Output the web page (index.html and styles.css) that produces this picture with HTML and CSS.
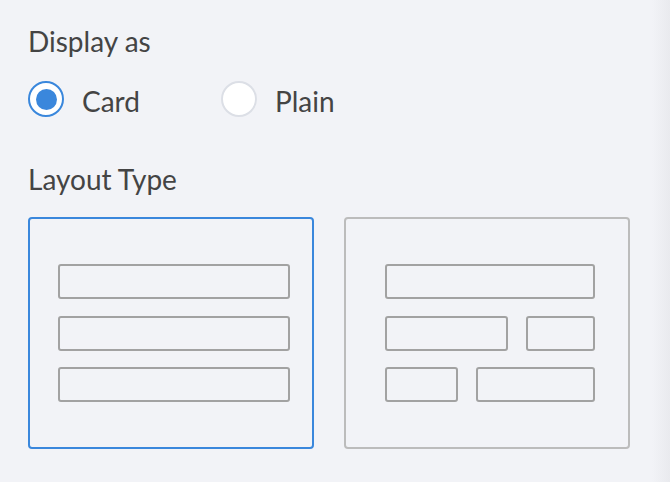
FILE: index.html
```html
<!DOCTYPE html>
<html>
<head>
<meta charset="utf-8">
<link rel="stylesheet" href="styles.css">
</head>
<body>
<div class="panel">
  <div class="heading">Display as</div>
  <div class="radio-row">
    <div class="option option-card">
      <span class="radio radio-checked"><span class="dot"></span></span>
      <span class="label">Card</span>
    </div>
    <div class="option">
      <span class="radio"></span>
      <span class="label">Plain</span>
    </div>
  </div>
  <div class="heading heading-layout">Layout Type</div>
  <div class="layouts">
    <div class="layout layout-selected">
      <div class="lrow"><div class="field w-full-l"></div></div>
      <div class="lrow"><div class="field w-full-l"></div></div>
      <div class="lrow"><div class="field w-full-l"></div></div>
    </div>
    <div class="layout layout-grid">
      <div class="lrow"><div class="field w-full-r"></div></div>
      <div class="lrow"><div class="field w-123"></div><div class="field w-69"></div></div>
      <div class="lrow"><div class="field w-73"></div><div class="field w-119"></div></div>
    </div>
  </div>
</div>
</body>
</html>
```

FILE: styles.css
```css
html, body {
  margin: 0;
  padding: 0;
  height: 100%;
}
body {
  background: linear-gradient(to right, #f2f3f7 0, #f2f3f7 calc(100% - 18px), #e9eaee 100%);
  font-family: Lato, "Open Sans", sans-serif;
  color: #444444;
}
.panel {
  display: flex;
  flex-direction: column;
  padding: 24px 0 0 28px;
}
.heading {
  font-size: 28px;
  line-height: 34px;
}
.heading-layout {
  margin-top: 45px;
}
.radio-row {
  display: flex;
  margin-top: 23px;
  height: 36px;
}
.option {
  display: flex;
  align-items: flex-start;
}
.option-card {
  width: 193px;
}
.radio {
  box-sizing: border-box;
  width: 36px;
  height: 36px;
  border-radius: 50%;
  border: 2px solid #dcdfe6;
  background: #ffffff;
  display: flex;
  align-items: center;
  justify-content: center;
}
.radio-checked {
  border-color: #3a87dc;
}
.dot {
  width: 21px;
  height: 21px;
  border-radius: 50%;
  background: #3a87dc;
}
.label {
  font-size: 28px;
  line-height: 34px;
  margin-top: 3px;
  margin-left: 18px;
}
.layouts {
  display: flex;
  gap: 30px;
  margin-top: 21px;
}
.layout {
  box-sizing: border-box;
  width: 286px;
  height: 232px;
  border: 2px solid #bcbcbc;
  border-radius: 4px;
  display: flex;
  flex-direction: column;
  gap: 16.5px;
  padding: 45px 0 0 28px;
}
.layout-selected {
  border-color: #3a87dc;
}
.layout-grid {
  padding-left: 39px;
}
.lrow {
  display: flex;
  gap: 18px;
}
.field {
  box-sizing: border-box;
  height: 35px;
  border: 2px solid #a2a2a2;
  border-radius: 3px;
}
.w-full-l { width: 232px; }
.w-full-r { width: 210px; }
.w-123 { width: 123px; }
.w-69 { width: 69px; }
.w-73 { width: 73px; }
.w-119 { width: 119px; }
```
